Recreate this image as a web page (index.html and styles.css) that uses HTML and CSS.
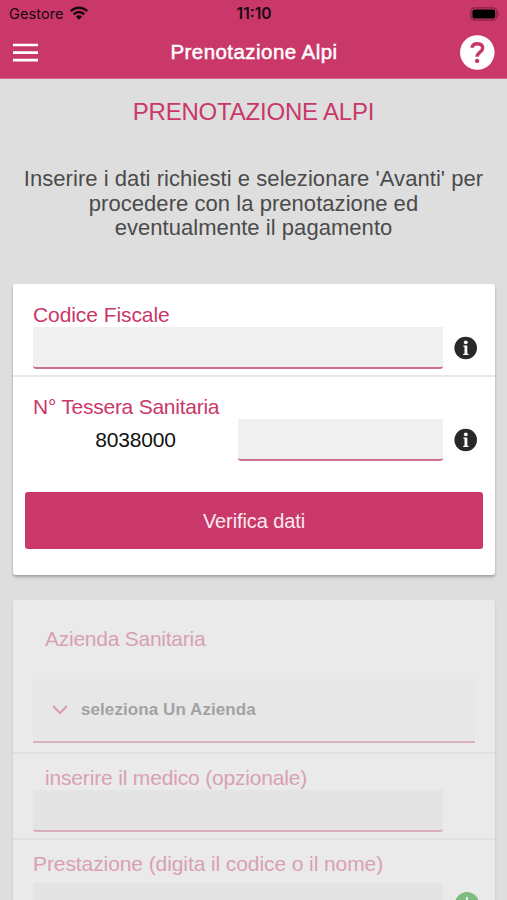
FILE: index.html
```html
<!DOCTYPE html>
<html lang="it">
<head>
<meta charset="utf-8">
<title>Prenotazione Alpi</title>
<link rel="stylesheet" href="styles.css">
</head>
<body>
<header class="header">
  <div class="status">
    <div class="carrier"><span class="carrier-name">Gestore</span>
      <svg class="wifi" width="18" height="14" viewBox="0 0 18 14"><g fill="none" stroke="#170711" stroke-width="2.4"><path d="M.8 5.2C5.3.5 12.7.5 17.2 5.2"/><path d="M3.8 8.3C6.7 5.3 11.3 5.3 14.2 8.3"/></g><path fill="#170711" d="M9 13.8 5.9 10.6Q9 7.9 12.1 10.6Z"/></svg>
    </div>
    <span class="time">11:10</span>
    <svg class="battery" width="30" height="14" viewBox="0 0 30 14"><rect x=".8" y=".8" width="26" height="12.4" rx="3.8" fill="none" stroke="#852047" stroke-width="1.3"/><rect x="2.4" y="2.4" width="22.8" height="9.2" rx="2.2" fill="#000"/><path d="M28.2 4.6Q30 7 28.2 9.4Z" fill="#852047"/></svg>
  </div>
  <nav class="nav">
    <svg width="26" height="20" viewBox="0 0 26 20"><path d="M0 2h25M0 9.6h25M0 17.2h25" stroke="#fff" stroke-width="2.7"/></svg>
    <h1 class="nav-title">Prenotazione Alpi</h1>
    <svg width="36" height="36" viewBox="0 0 36 36"><circle cx="18.3" cy="17.5" r="17.3" fill="#fff"/><path d="M12.9 12.8Q13.4 8.7 18.2 8.7C21.8 8.7 23.7 10.5 23.7 13.1C23.7 17.3 18.1 17 18.1 21.8" fill="none" stroke="#c93869" stroke-width="3.4"/><circle cx="18.1" cy="25.9" r="2.2" fill="#c93869"/></svg>
  </nav>
</header>
<main>
  <h2 class="title">PRENOTAZIONE ALPI</h2>
  <p class="intro"><span class="line">Inserire i dati richiesti e selezionare 'Avanti' per</span> <span class="line">procedere con la prenotazione ed</span> <span class="line">eventualmente il pagamento</span></p>

  <section class="card">
    <div class="row">
      <label class="label codice" for="cf">Codice Fiscale</label>
      <div class="field"><input class="input" id="cf">
        <svg class="info" width="24" height="24" viewBox="0 0 24 24"><circle cx="11.7" cy="12" r="11.3" fill="#292929"/><circle cx="11.8" cy="6.3" r="1.9" fill="#fff"/><path fill="#fff" d="M9.4 9.4h3.9v8.3h1.2v1.3H9.2v-1.3h1.3v-7H9.4z"/></svg>
      </div>
    </div>
    <div class="row card-number">
      <label class="label tessera" for="ts">N° Tessera Sanitaria</label>
      <div class="field"><span class="prefix">8038000</span><input class="input" id="ts">
        <svg class="info" width="24" height="24" viewBox="0 0 24 24"><circle cx="11.7" cy="12" r="11.3" fill="#292929"/><circle cx="11.8" cy="6.3" r="1.9" fill="#fff"/><path fill="#fff" d="M9.4 9.4h3.9v8.3h1.2v1.3H9.2v-1.3h1.3v-7H9.4z"/></svg>
      </div>
    </div>
    <button class="button">Verifica dati</button>
  </section>

  <section class="card disabled">
    <div class="row company">
      <span class="label indent azienda">Azienda Sanitaria</span>
      <div class="select"><svg width="16" height="10" viewBox="0 0 16 10"><path d="m1 1 7 7 7-7" fill="none" stroke="#d69cb1" stroke-width="2"/></svg><span class="select-text">seleziona Un Azienda</span></div>
    </div>
    <div class="row doctor">
      <label class="label indent medico" for="doc">inserire il medico (opzionale)</label>
      <div class="field"><input class="input" id="doc"></div>
    </div>
    <div class="row service">
      <label class="label prestazione" for="srv">Prestazione (digita il codice o il nome)</label>
      <div class="field"><input class="input" id="srv">
        <svg class="info" width="26" height="26" viewBox="0 0 26 26"><circle cx="13" cy="13" r="12" fill="#7dbb81"/><path d="M13 6v14M6 13h14" stroke="#e8ece8" stroke-width="2.2"/></svg>
      </div>
    </div>
  </section>
</main>
</body>
</html>
```

FILE: styles.css
```css
* { box-sizing: border-box; }
html, body { height: 900px; overflow: hidden; }
body { margin: 0; background: #dedede; font-family: "Liberation Sans", Arial, sans-serif; color: #4b4b4b; }
svg { display: block; flex: none; }
h1, h2, p { margin: 0; font-weight: 400; }

.header { height: 79px; background: #c93869; border-bottom: 1px solid #d5698e; }
.status { height: 27px; padding: 0 8px 0 9px; display: grid; grid-template-columns: 1fr auto 1fr; align-items: center; color: #170711; }
.carrier { display: flex; align-items: center; gap: 6px; font: 14.5px Inter, sans-serif; }
.carrier-name { letter-spacing: .1px; }
.wifi { margin-top: -2px; }
.time { font: 600 15.5px Inter, sans-serif; }
.battery { justify-self: end; width: 30px; margin-right: -1px; }
.nav { height: 51px; padding: 0 12px 0 13px; display: grid; grid-template-columns: 36px 1fr 36px; align-items: center; }
.nav-title { margin-top: -1px; text-align: center; color: #fff; font-size: 20.5px; line-height: 26px; -webkit-text-stroke: .5px #fff; letter-spacing: .45px; }

.title { margin-top: 19px; text-align: center; color: #c93869; font-size: 24px; line-height: 28px; letter-spacing: -.2px; }
.intro { margin-top: 41px; text-align: center; font-size: 22px; line-height: 24.5px; letter-spacing: .05px; }
.line { display: block; white-space: nowrap; }

.card { margin: 43px 12px 0 13px; height: 291px; background: #fff; border-radius: 3px; box-shadow: 0 2px 3px rgba(0,0,0,.28); }
.row { height: 93px; padding: 19px 17px 0 20px; border-bottom: 2px solid #e7e7e7; }
.label { display: block; height: 24px; line-height: 24px; font-size: 21px; color: #c93869; white-space: nowrap; }
.codice { letter-spacing: -.08px; }
.tessera, .azienda { letter-spacing: -.25px; }
.medico { letter-spacing: -.17px; }
.prestazione { letter-spacing: -.09px; }
.field { display: flex; align-items: center; height: 42px; }
.input { flex: 1; min-width: 0; height: 42px; border: 0; border-bottom: 2px solid #cb6e8f; border-radius: 0 0 3px 3px; background: #f0f0f0; outline: 0; }
.info { margin-left: 11px; }
.card-number { height: 115px; padding-top: 18px; border-bottom: 0; }
.prefix { width: 205px; text-align: center; font-size: 21px; letter-spacing: -.15px; color: #111; }
.button { display: block; width: 458px; height: 57px; margin: 0 12px; padding: 2px 0 0; border: 0; border-radius: 3px; background: #c93869; color: #fbe9f0; font: 20px "Liberation Sans", Arial, sans-serif; letter-spacing: -.1px; }

.disabled { height: 340px; margin-top: 25px; background: #eaeaea; box-shadow: 0 2px 3px rgba(0,0,0,.12); }
.disabled .row { border-color: #e0e0e0; }
.disabled .label { color: #d9a0b5; }
.disabled .input { background: #e4e4e4; border-color: #dbacbd; }
.indent { padding-left: 12px; }
.company { height: 154px; padding-top: 27px; }
.select { width: 442px; height: 64px; margin-top: 28px; padding: 0 0 0 19px; display: flex; align-items: center; gap: 13px; background: #e7e7e7; border-bottom: 2px solid #dbb2c0; }
.select-text { font-weight: 700; font-size: 17px; letter-spacing: .08px; color: #a2a2a2; }
.doctor { height: 86px; padding-top: 12px; }
.doctor .input { margin-right: 35px; }
.service { height: 100px; padding-top: 12px; border: 0; }
.service .field { margin: 7px -2px 0 0; }
```
